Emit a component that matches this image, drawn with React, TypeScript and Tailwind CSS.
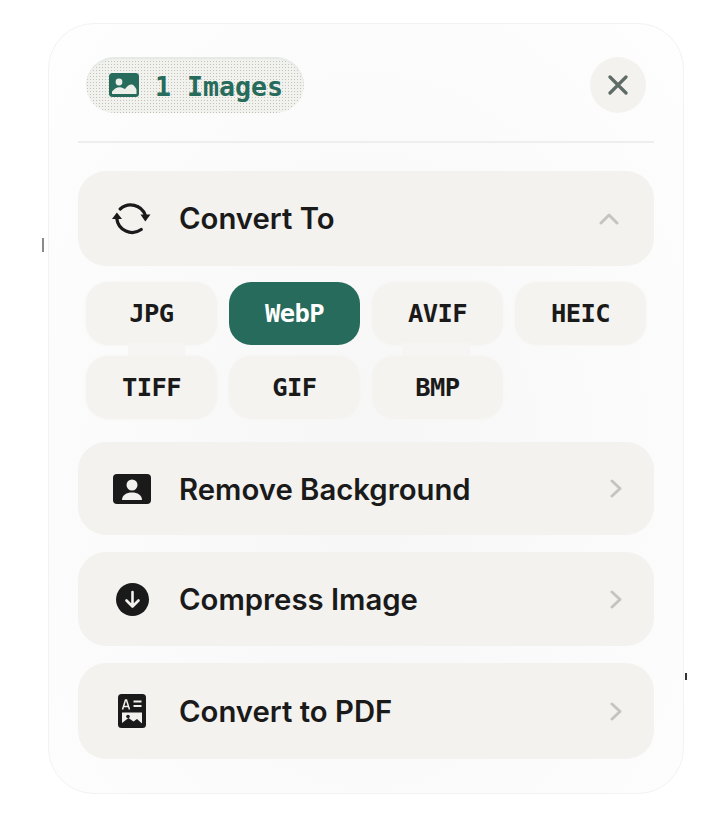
import React from "react";

const mono = "font-['DejaVu_Sans_Mono','Liberation_Mono',monospace] font-bold";
const inter = "font-['Inter','Noto_Sans',sans-serif]";

function ChevronRight() {
  return (
    <svg width="12" height="19" viewBox="0 0 12 19" fill="none" stroke="#c4c5c0" strokeWidth="3" strokeLinecap="round" strokeLinejoin="round">
      <path d="M2 2l8 7.500-8 7.500" />
    </svg>
  );
}

function ChevronUp() {
  return (
    <svg width="20" height="12" viewBox="0 0 20 12" fill="none" stroke="#c4c5c0" strokeWidth="3" strokeLinecap="round" strokeLinejoin="round" className="mr-[3px]">
      <path d="M2 10l8-8 8 8" />
    </svg>
  );
}

function SyncIcon() {
  return (
    <svg width="40" height="34" viewBox="0 0 40 34" fill="none">
      <path d="M8.200 7A15.500 15.500 0 0 1 33.200 13" stroke="#1a1a1a" strokeWidth="3.200" strokeLinecap="round" />
      <path d="M29.200 27.500A15.500 15.500 0 0 1 4.800 16.500" stroke="#1a1a1a" strokeWidth="3.200" strokeLinecap="round" />
      <path d="M28.500 12.500H38.500L33.300 19.500z" fill="#1a1a1a" />
      <path d="M0 17H10L4.900 10.500z" fill="#1a1a1a" />
    </svg>
  );
}

function PersonIcon() {
  return (
    <svg width="38" height="30" viewBox="0 0 38 30">
      <rect width="38" height="30" rx="4" fill="#1a1a1a" />
      <circle cx="19" cy="11" r="5.500" fill="#f3f1ee" />
      <path d="M9 26c0-5 4.500-7.500 10-7.500S29 21 29 26z" fill="#f3f1ee" />
    </svg>
  );
}

function DownIcon() {
  return (
    <svg width="33" height="33" viewBox="0 0 33 33">
      <circle cx="16.500" cy="16.500" r="16.500" fill="#1a1a1a" />
      <path d="M16.500 9v14M10.500 17.500l6 6 6-6" stroke="#f3f1ee" strokeWidth="2.600" fill="none" strokeLinecap="round" strokeLinejoin="round" />
    </svg>
  );
}

function DocIcon() {
  return (
    <svg width="28" height="34" viewBox="0 0 28 34">
      <rect width="28" height="34" rx="3.500" fill="#1a1a1a" />
      <path d="M4.500 15.500 7.500 6h1l3 9.500M6 12.500h4" stroke="#f3f1ee" strokeWidth="1.500" fill="none" />
      <path d="M15.500 7.500h8M15.500 12h8" stroke="#f3f1ee" strokeWidth="2" />
      <path d="M4 18.500h20v11l-5-4.500-3.500 2.500-5-3.500-6.500 5z" fill="#f3f1ee" />
      <circle cx="10" cy="22.500" r="1.800" fill="#1a1a1a" />
    </svg>
  );
}

function ImageIcon() {
  return (
    <svg width="30" height="24" viewBox="0 0 30 24">
      <rect width="30" height="24" rx="3.500" fill="#266b5b" />
      <circle cx="10" cy="9" r="3.400" fill="#eceee9" />
      <path d="M3 21v-2.500c3-3.500 6-5 9.500-4 1.500.5 2.500 1.300 3.500 1.500 2-2.500 4-4.500 6.500-4.500 2 0 3.500 2 5 5V21z" fill="#eceee9" />
    </svg>
  );
}

function Row({ icon, label, className, chevron, labelClass }: { icon: React.ReactNode; label: string; className: string; chevron: React.ReactNode; labelClass?: string }) {
  return (
    <div className={`flex items-center rounded-[28px] bg-[#f3f2ef] px-[32px] ${className}`}>
      <div className="flex w-[44px] justify-center">{icon}</div>
      <span className={`${inter} ml-[25px] flex-1 text-[29.300px] font-semibold leading-none text-[#1a1a1a] ${labelClass ?? ""}`}>{label}</span>
      {chevron}
    </div>
  );
}

const formats = ["JPG", "WebP", "AVIF", "HEIC", "TIFF", "GIF", "BMP"];
const dotted = new Set(["TIFF", "GIF", "BMP"]);

export default function App() {
  return (
    <div className="relative h-[828px] w-[708px] overflow-hidden bg-white pl-[48px] pt-[23px]">
      <div className="absolute left-[42px] top-[238px] h-[14px] w-[2px] bg-[#8a8a8a]" />
      <div className="absolute left-[685px] top-[673px] h-[7px] w-[2px] bg-[#333333]" />
      <div className="flex h-[771px] w-[636px] flex-col rounded-[46px] border border-[#f2f2f1] bg-[radial-gradient(ellipse_at_50%_58%,#f6f6f6_0%,#fbfbfb_60%,#fefefe_100%)] px-[29px] pt-[33px]">
        <div className="flex h-[56px] items-center justify-between px-[8px]">
          <div className="flex h-[56px] w-[218px] items-center rounded-full bg-[#f1f1ed] bg-[radial-gradient(#c2c2ba_0.6px,transparent_0.7px)] bg-[length:3px_3px] pl-[23px] shadow-[inset_0_2px_1px_#e6eae7]">
            <ImageIcon />
            <span className={`${mono} ml-[16px] mt-[4px] text-[26.600px] leading-none text-[#266b5b]`}>1 Images</span>
          </div>
          <div className="flex h-[56px] w-[56px] items-center justify-center rounded-full bg-[#f3f2ef]">
            <svg width="20" height="20" viewBox="0 0 20 20" fill="none" stroke="#5f6b66" strokeWidth="3.200" strokeLinecap="round">
              <path d="M2 2l16 16M18 2 2 18" />
            </svg>
          </div>
        </div>
        <div className="mt-[28px] h-[2px] bg-[#eeeeed]" />
        <Row icon={<SyncIcon />} label="Convert To" chevron={<ChevronUp />} className="mt-[28px] h-[95px]" />
        <div className="mt-[16px] grid grid-cols-4 gap-x-[12px] gap-y-[11px] px-[8px]">
          {formats.map((f) => (
            <div
              key={f}
              className={`${mono} relative flex h-[63px] items-center justify-center rounded-[22px] text-[25.500px] leading-none tracking-[-0.6px] ${
                f === "WebP" ? "bg-[#266b5b] text-white" : "bg-[#f5f3f0] text-[#1a1a1a] shadow-[0_0_3px_#f6f4f1]"
              }`}
            >
              {f === "JPG" && <div className="absolute left-[42px] top-[61px] h-[13px] w-[57px] bg-[#f6f5f3]" />}
              {f === "AVIF" && <div className="absolute left-[30px] top-[61px] h-[13px] w-[68px] bg-[#f6f5f3]" />}
              {dotted.has(f) && (
                <div className="absolute bottom-[3px] left-[14px] right-[8px] h-[12px] bg-[radial-gradient(#c9c9c2_0.6px,transparent_0.7px)] bg-[length:8px_4px]" />
              )}
              <span className="relative">{f}</span>
            </div>
          ))}
        </div>
        <Row icon={<PersonIcon />} label="Remove Background" labelClass="mt-[3px]" chevron={<ChevronRight />} className="mt-[23px] h-[93px]" />
        <Row icon={<DownIcon />} label="Compress Image" labelClass="mt-[2px]" chevron={<ChevronRight />} className="mt-[17px] h-[94px]" />
        <Row icon={<DocIcon />} label="Convert to PDF" labelClass="mt-[1px]" chevron={<ChevronRight />} className="mt-[17px] h-[96px]" />
      </div>
    </div>
  );
}
